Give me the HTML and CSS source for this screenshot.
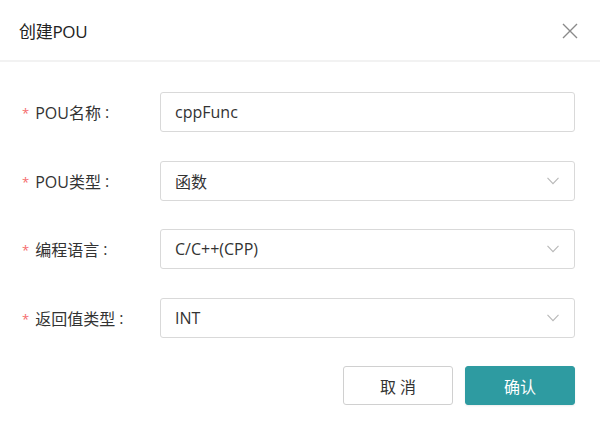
FILE: index.html
```html
<!DOCTYPE html>
<html lang="zh">
<head>
<meta charset="utf-8">
<link rel="stylesheet" href="styles.css">
</head>
<body>
<div class="dialog">
  <div class="header">
    <span class="title">创建POU</span>
    <svg class="close" width="16" height="16" viewBox="0 0 16 16"><path d="M1 1L15 15M15 1L1 15" stroke="#8a8a8a" stroke-width="1.4" fill="none"/></svg>
  </div>
  <div class="form">
    <div class="row">
      <label class="label"><span class="req">*</span>POU名称<span class="colon">:</span></label>
      <div class="field"><span class="val">cppFunc</span></div>
    </div>
    <div class="row">
      <label class="label"><span class="req">*</span>POU类型<span class="colon">:</span></label>
      <div class="field"><span class="val">函数</span><svg class="chev" width="12" height="8" viewBox="0 0 12 8"><path d="M0.5 0.8L6 6.6L11.5 0.8" stroke="#b8b8b8" stroke-width="1.1" fill="none"/></svg></div>
    </div>
    <div class="row">
      <label class="label"><span class="req">*</span>编程语言<span class="colon">:</span></label>
      <div class="field"><span class="val">C/C++(CPP)</span><svg class="chev" width="12" height="8" viewBox="0 0 12 8"><path d="M0.5 0.8L6 6.6L11.5 0.8" stroke="#b8b8b8" stroke-width="1.1" fill="none"/></svg></div>
    </div>
    <div class="row">
      <label class="label"><span class="req">*</span>返回值类型<span class="colon">:</span></label>
      <div class="field"><span class="val">INT</span><svg class="chev" width="12" height="8" viewBox="0 0 12 8"><path d="M0.5 0.8L6 6.6L11.5 0.8" stroke="#b8b8b8" stroke-width="1.1" fill="none"/></svg></div>
    </div>
    <div class="actions">
      <button class="btn cancel">取 消</button>
      <button class="btn ok">确认</button>
    </div>
  </div>
</div>
</body>
</html>
```
FILE: styles.css
```css
html, body {
  margin: 0;
  padding: 0;
  background: #fff;
}
body {
  font-family: "Open Sans", "Noto Sans CJK SC", sans-serif;
  color: #333;
}
.dialog {
  width: 600px;
  height: 434px;
}
.header {
  display: flex;
  align-items: center;
  justify-content: space-between;
  padding: 0 22px 0 19px;
  border-bottom: 2px solid #f2f2f2;
  box-sizing: border-box;
  height: 62px;
}
.title {
  font-size: 17px;
  color: #222;
  letter-spacing: -0.3px;
}
.close {
  display: block;
  margin-top: 1px;
}
.form {
  padding: 30px 25px 0 22px;
}
.row {
  display: flex;
  align-items: center;
  margin-bottom: 28.7px;
}
.label {
  width: 138px;
  font-size: 16px;
  color: #333;
  display: flex;
  align-items: center;
}
.colon {
  margin-left: 4px;
}
.req {
  color: #f56c6c;
  margin-right: 6px;
  font-size: 13px;
  position: relative;
  top: 1px;
}
.field {
  flex: 1;
  height: 40px;
  box-sizing: border-box;
  border: 1px solid #d9d9d9;
  border-radius: 3px;
  display: flex;
  align-items: center;
  justify-content: space-between;
  padding: 0 15px 0 14px;
  font-size: 16px;
  color: #333;
}
.chev {
  display: block;
}
.actions {
  display: flex;
  justify-content: flex-end;
  gap: 12px;
  margin-top: -0.7px;
}
.btn {
  width: 110px;
  height: 39px;
  border-radius: 3px;
  font-family: "Open Sans", "Noto Sans CJK SC", sans-serif;
  font-size: 16px;
  cursor: pointer;
}
.cancel {
  background: #fff;
  border: 1px solid #d0d0d0;
  color: #333;
}
.ok {
  background: #2e9ba1;
  border: 1px solid #2e9ba1;
  color: #fff;
  box-shadow: 0 1px 2px rgba(0,0,0,0.08);
}
```
